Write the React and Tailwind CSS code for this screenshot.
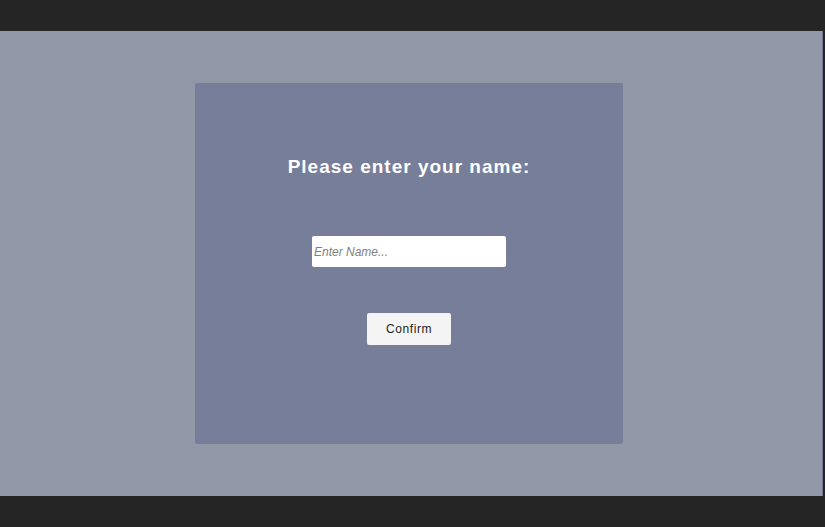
export default function App() {
  return (
    <div className="flex h-[527px] w-[825px] flex-col bg-[#252525] font-['Liberation_Sans',Arial,sans-serif]">
      <div className="h-[31px] shrink-0" />
      <main className="h-[465px] w-[823px] shrink-0 border-r border-[#6f7897] bg-[#9398a8] pl-[195px] pt-[52px]">
        <section className="flex h-[361px] w-[428px] flex-col items-center rounded-[2px] bg-[#777e9a]">
          <h1 className="mt-[73px] text-[19px] font-bold leading-[22px] tracking-[1px] text-white">
            Please enter your name:
          </h1>
          <input
            type="text"
            placeholder="Enter Name..."
            className="mt-[58px] h-[31px] w-[194px] rounded-[2px] bg-white px-[2px] text-[12px] italic text-[#333] outline-none placeholder:text-[#808080]"
          />
          <button className="mt-[46px] h-[32px] w-[84px] rounded-[2px] bg-[#f4f4f4] text-[12px] tracking-[0.6px] text-[#222]">
            Confirm
          </button>
        </section>
      </main>
    </div>
  );
}
